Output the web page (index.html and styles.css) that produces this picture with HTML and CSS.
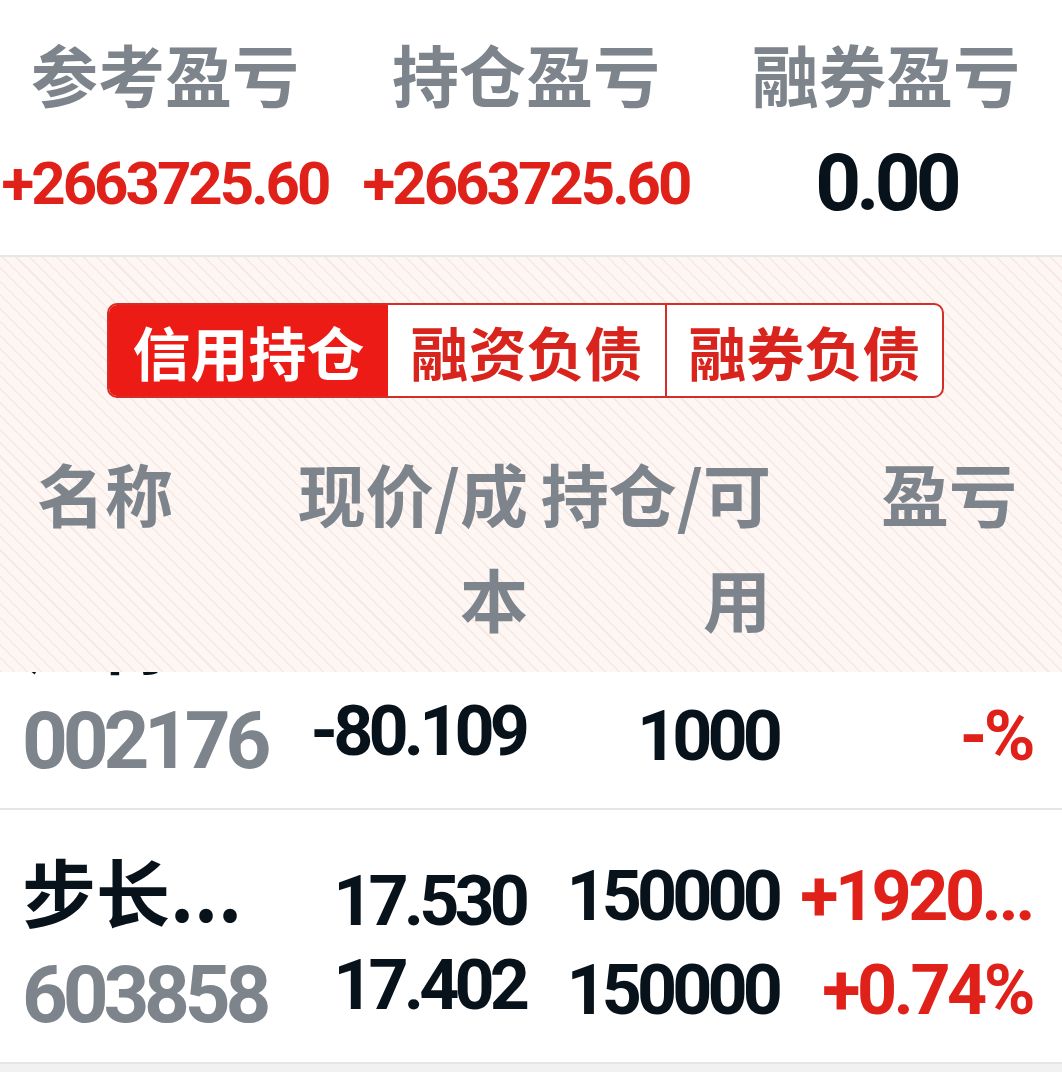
FILE: index.html
```html
<!DOCTYPE html>
<html lang="zh-CN">
<head>
<meta charset="utf-8">
<title>信用持仓</title>
<link rel="stylesheet" href="styles.css">
</head>
<body>
<div class="summary">
  <div class="stat">
    <div class="stat-label">参考盈亏</div>
    <div class="stat-value up">+2663725.60</div>
  </div>
  <div class="stat">
    <div class="stat-label">持仓盈亏</div>
    <div class="stat-value up">+2663725.60</div>
  </div>
  <div class="stat">
    <div class="stat-label">融券盈亏</div>
    <div class="stat-value big">0.00</div>
  </div>
</div>

<div class="panel">
  <div class="seg">
    <div class="seg-item active">信用持仓</div>
    <div class="seg-item">融资负债</div>
    <div class="seg-item divided">融券负债</div>
  </div>
  <div class="thead">
    <div class="th th-left">名称</div>
    <div class="th">现价/成本</div>
    <div class="th">持仓/可用</div>
    <div class="th">盈亏</div>
  </div>
</div>

<div class="list">
  <div class="rows">
    <div class="row">
      <div class="cell c-name">
        <div class="name">江特...</div>
        <div class="code">002176</div>
      </div>
      <div class="cell c-price">
        <div>&nbsp;</div>
        <div>-80.109</div>
      </div>
      <div class="cell c-qty">
        <div>&nbsp;</div>
        <div>1000</div>
      </div>
      <div class="cell c-pnl">
        <div>&nbsp;</div>
        <div>-%</div>
      </div>
    </div>
    <div class="row">
      <div class="cell c-name">
        <div class="name">步长...</div>
        <div class="code">603858</div>
      </div>
      <div class="cell c-price">
        <div>17.530</div>
        <div>17.402</div>
      </div>
      <div class="cell c-qty">
        <div>150000</div>
        <div>150000</div>
      </div>
      <div class="cell c-pnl">
        <div>+1920...</div>
        <div>+0.74%</div>
      </div>
    </div>
  </div>
</div>
</body>
</html>
```

FILE: styles.css
```css
html, body {
  margin: 0;
  padding: 0;
}
body {
  width: 1062px;
  height: 1072px;
  overflow: hidden;
  background: #ffffff;
  font-family: "Noto Sans CJK SC", "Noto Sans", sans-serif;
}

/* ---------- summary ---------- */
.summary {
  display: grid;
  grid-template-columns: 330px 392px 328px;
  box-sizing: border-box;
  height: 257px;
  padding-top: 23px;
  border-bottom: 2px solid #e6e7e8;
  background: #ffffff;
}
.stat {
  display: flex;
  flex-direction: column;
  align-items: center;
}
.stat-label {
  font-family: "Noto Sans CJK SC", sans-serif;
  font-weight: 700;
  font-size: 67px;
  line-height: 100px;
  color: #7d848b;
  white-space: nowrap;
}
.stat-value {
  font-family: Roboto, "Liberation Sans", sans-serif;
  font-weight: 700;
  font-size: 60px;
  line-height: 121px;
  letter-spacing: -0.05em;
  white-space: nowrap;
}
.stat-value.up {
  color: #e0211a;
}
.stat-value.big {
  font-size: 80px;
  letter-spacing: -0.06em;
  color: #07121b;
}

/* ---------- striped panel ---------- */
.panel {
  box-sizing: border-box;
  height: 415px;
  padding-top: 46px;
  background: repeating-linear-gradient(45deg, #f6e9e5 0 1.5px, #fdf6f3 1.5px 9.5px);
}
.seg {
  margin-left: 107px;
  width: 837px;
  height: 95px;
  box-sizing: border-box;
  border: 2px solid #d52e28;
  border-radius: 10px;
  overflow: hidden;
  background: #ffffff;
  display: grid;
  grid-template-columns: 279px 1fr 1fr;
}
.seg-item {
  display: flex;
  align-items: center;
  justify-content: center;
  font-family: "Noto Sans CJK SC", sans-serif;
  font-weight: 700;
  font-size: 58px;
  line-height: 1;
  color: #d8241c;
}
.seg-item.active {
  background: #ec1b15;
  color: #ffffff;
}
.seg-item.divided {
  border-left: 2px solid #d52e28;
}

.thead {
  margin-top: 42px;
  padding-left: 37px;
  display: grid;
  grid-template-columns: 253px 238px 243px 246px;
  font-family: "Noto Sans CJK SC", sans-serif;
  font-weight: 700;
  font-size: 68px;
  line-height: 105px;
  color: #7d848b;
}
.th {
  text-align: right;
}
.th-left {
  text-align: left;
}

/* ---------- list ---------- */
.list {
  height: 400px;
  overflow: hidden;
  background: #f1f1f1;
}
.rows {
  margin-top: -116px;
}
.row {
  display: grid;
  grid-template-columns: 270px 233px 253px 254px;
  padding-left: 22px;
  height: 252px;
  background: #ffffff;
  border-bottom: 2px solid #e6e6e6;
}
.cell {
  white-space: nowrap;
}
.c-name {
  padding-top: 30px;
}
.name {
  font-family: "Noto Sans CJK SC", sans-serif;
  font-weight: 700;
  font-size: 74px;
  line-height: 100px;
  color: #07121b;
}
.code {
  font-family: Roboto, "Liberation Sans", sans-serif;
  font-weight: 700;
  font-size: 80px;
  line-height: 111px;
  letter-spacing: -0.065em;
  color: #7d848b;
}
.c-price,
.c-qty,
.c-pnl {
  text-align: right;
  font-family: Roboto, "Liberation Sans", sans-serif;
  font-weight: 700;
  font-size: 70px;
  letter-spacing: -0.07em;
  color: #07121b;
}
.c-price {
  padding-top: 49px;
  line-height: 84px;
}
.c-qty,
.c-pnl {
  padding-top: 39px;
  line-height: 94px;
}
.c-pnl {
  color: #e0211a;
  letter-spacing: -0.05em;
}
```
